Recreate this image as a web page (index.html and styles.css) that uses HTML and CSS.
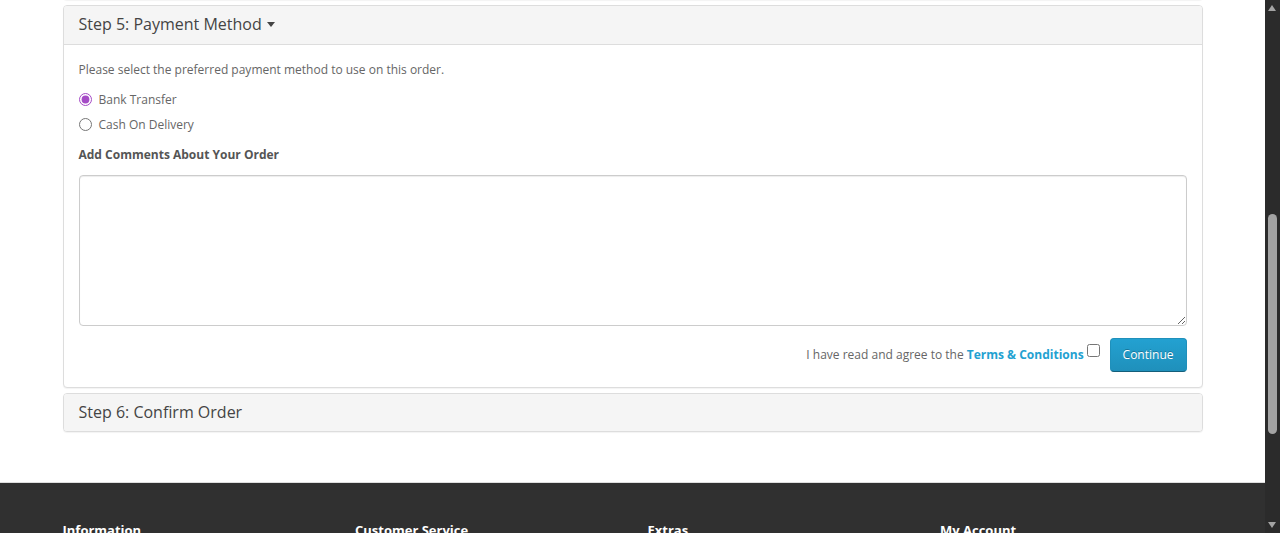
FILE: index.html
```html
<!DOCTYPE html>
<html>
<head>
<meta charset="utf-8">
<link rel="stylesheet" href="styles.css">
</head>
<body>
<div class="page">
  <div class="container main">
    <div class="panel-group">
      <div class="panel panel-prev"></div>
      <div class="panel">
        <div class="panel-heading">
          <h4 class="panel-title">Step 5: Payment Method <span class="caret"></span></h4>
        </div>
        <div class="panel-body">
          <p>Please select the preferred payment method to use on this order.</p>
          <div class="radio"><label><input type="radio" name="pm" checked> Bank Transfer</label></div>
          <div class="radio radio-next"><label><input type="radio" name="pm"> Cash On Delivery</label></div>
          <p class="comments-label"><strong>Add Comments About Your Order</strong></p>
          <p><textarea class="form-control" rows="8"></textarea></p>
          <div class="buttons">
            <span class="agree">I have read and agree to the <a href="#" class="terms">Terms &amp; Conditions</a></span><input type="checkbox" class="agree-box">
            <button class="btn-primary" type="button">Continue</button>
          </div>
        </div>
      </div>
      <div class="panel">
        <div class="panel-heading">
          <h4 class="panel-title">Step 6: Confirm Order</h4>
        </div>
      </div>
    </div>
  </div>
  <footer class="footer">
    <div class="container footer-row">
      <div class="footer-col"><h5>Information</h5></div>
      <div class="footer-col"><h5>Customer Service</h5></div>
      <div class="footer-col"><h5>Extras</h5></div>
      <div class="footer-col"><h5>My Account</h5></div>
    </div>
  </footer>
</div>
<div class="scrollbar">
  <div class="sb-arrow sb-up"></div>
  <div class="sb-thumb"></div>
  <div class="sb-arrow sb-down"></div>
</div>
</body>
</html>
```

FILE: styles.css
```css
* { box-sizing: border-box; }
html { overflow: hidden; }
body {
  margin: 0;
  font-family: "Open Sans", "Liberation Sans", sans-serif;
  font-size: 12px;
  line-height: 20px;
  color: #666;
  background: #fff;
}
.page {
  width: 1265px;
  height: 533px;
  overflow: hidden;
  display: flex;
  flex-direction: column;
}
.container {
  width: 1170px;
  margin: 0 auto;
  padding: 0 15px;
}
.panel-group {
  margin-bottom: 20px;
}
.panel {
  background: #fff;
  border: 1px solid #ddd;
  border-radius: 4px;
  box-shadow: 0 1px 1px rgba(0,0,0,0.05);
}
.panel + .panel { margin-top: 5px; }
.panel-prev {
  height: 40px;
  margin-top: -40px;
}
.panel-heading {
  background: #f5f5f5;
  border-bottom: 1px solid #ddd;
  padding: 10px 15px;
  border-radius: 3px 3px 0 0;
}
.panel-group .panel:last-child .panel-heading {
  border-bottom: 0;
  border-radius: 3px;
}
.panel-title {
  margin: 0;
  font-size: 16px;
  font-weight: 500;
  line-height: 1.1;
  color: #444;
}
.caret {
  display: inline-block;
  width: 0;
  height: 0;
  margin-left: 1px;
  vertical-align: middle;
  border-top: 5px solid #444;
  border-left: 4px solid transparent;
  border-right: 4px solid transparent;
  position: relative;
  top: -1px;
}
.panel-body {
  padding: 15px;
}
p { margin: 0 0 9px; }
.radio {
  margin: 10px 0;
}
.radio-next { margin-top: -5px; }
.radio label {
  display: flex;
  align-items: center;
  min-height: 20px;
  font-weight: normal;
  cursor: pointer;
}
.radio input {
  margin: 0 7px 0 0;
  width: 13px;
  height: 13px;
  accent-color: #a54bc6;
}
.comments-label { margin-top: 10px; margin-bottom: 10px; }
strong { font-weight: bold; color: #555; }
.form-control {
  display: block;
  width: 100%;
  height: 151px;
  padding: 6px 12px;
  font-family: inherit;
  font-size: 12px;
  line-height: 1.42857;
  color: #555;
  background: #fff;
  border: 1px solid #ccc;
  border-radius: 4px;
  box-shadow: inset 0 1px 1px rgba(0,0,0,0.075);
  resize: vertical;
}
.buttons {
  margin: 12px 0 0;
  display: flex;
  justify-content: flex-end;
  align-items: center;
}
.agree { color: #666; }
.terms {
  color: #23a1d1;
  font-weight: bold;
  text-decoration: none;
}
.agree-box {
  margin: 0 0 2px 3px;
  width: 13px;
  height: 13px;
  align-self: center;
  position: relative;
  top: -3px;
}
.btn-primary {
  margin-left: 10px;
  font-family: inherit;
  font-size: 12px;
  line-height: 1.42857;
  padding: 7.5px 12px;
  color: #fff;
  text-shadow: 0 -1px 0 rgba(0,0,0,0.25);
  background-color: #229ac8;
  background-image: linear-gradient(to bottom, #23a1d1, #1f90bb);
  border: 1px solid;
  border-color: #1f90bb #1f90bb #145e7a;
  border-radius: 4px;
  cursor: pointer;
}
.footer {
  flex: none;
  margin-top: 30px;
  padding-top: 30px;
  background: #303030;
  border-top: 1px solid #ddd;
  color: #e2e2e2;
  height: 200px;
}
.footer-row {
  display: flex;
}
.footer-col {
  width: 25%;
  padding: 0 15px;
}
.footer-row.container { padding: 0; }
.footer h5 {
  margin: 10px 0;
  font-size: 13px;
  font-weight: bold;
  line-height: 1.1;
  color: #fff;
}
.scrollbar {
  position: fixed;
  top: 0;
  right: 0;
  width: 15px;
  height: 533px;
  background: #2b2b2b;
}
.sb-thumb {
  position: absolute;
  left: 3px;
  top: 214px;
  width: 9px;
  height: 220px;
  background: #a3a3a3;
  border-radius: 5px;
}
.sb-arrow {
  position: absolute;
  left: 3px;
  width: 0;
  height: 0;
  border-left: 4.5px solid transparent;
  border-right: 4.5px solid transparent;
}
.sb-up { top: 5px; border-bottom: 6px solid #a3a3a3; }
.sb-down { bottom: 5px; border-top: 6px solid #a3a3a3; }
```
